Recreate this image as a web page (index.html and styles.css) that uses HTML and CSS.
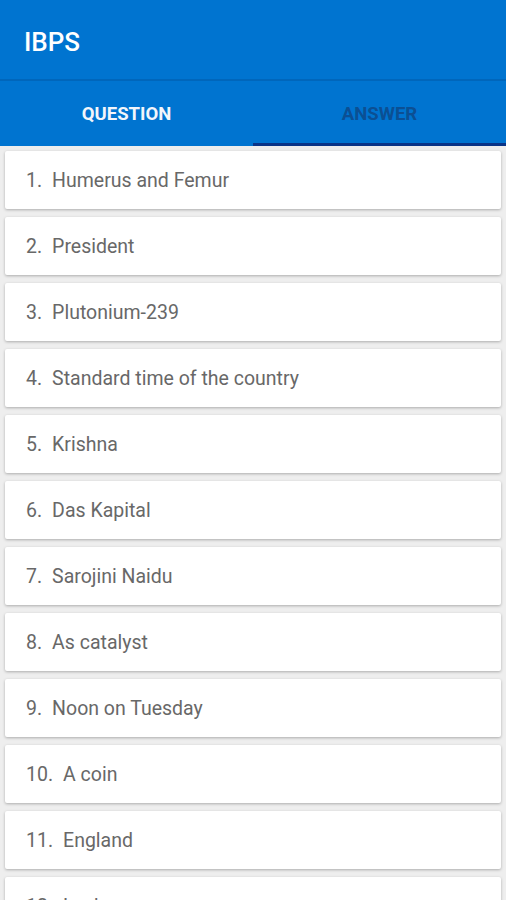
FILE: index.html
```html
<!DOCTYPE html>
<html lang="en">
<head>
    <meta charset="UTF-8">
    <meta name="viewport" content="width=device-width, initial-scale=1.0">
    <title>IBPS</title>
    <link rel="stylesheet" href="styles.css">
</head>
<body>
    <header class="app-bar">
        <h1>IBPS</h1>
    </header>
    <nav class="tabs">
        <div class="tab">QUESTION</div>
        <div class="tab active">ANSWER</div>
    </nav>
    <ul class="list">
        <li class="card"><span class="num">1.</span>Humerus and Femur</li>
        <li class="card"><span class="num">2.</span>President</li>
        <li class="card"><span class="num">3.</span>Plutonium-239</li>
        <li class="card"><span class="num">4.</span>Standard time of the country</li>
        <li class="card"><span class="num">5.</span>Krishna</li>
        <li class="card"><span class="num">6.</span>Das Kapital</li>
        <li class="card"><span class="num">7.</span>Sarojini Naidu</li>
        <li class="card"><span class="num">8.</span>As catalyst</li>
        <li class="card"><span class="num">9.</span>Noon on Tuesday</li>
        <li class="card"><span class="num">10.</span>A coin</li>
        <li class="card"><span class="num">11.</span>England</li>
        <li class="card"><span class="num">12.</span>Lucknow</li>
    </ul>
</body>
</html>
```

FILE: styles.css
```css
body {
    font-family: Roboto, "Liberation Sans", sans-serif;
    margin: 0;
    padding: 0;
    background: #eeeeee;
    overflow: hidden;
    height: 900px;
}
.app-bar {
    height: 81px;
    background: #0074d0;
    border-bottom: 2px solid #0066bb;
    display: flex;
    align-items: center;
    padding: 4px 24px 0;
    box-sizing: border-box;
}
.app-bar h1 {
    margin: 0;
    color: #fff;
    font-size: 26px;
    font-weight: 500;
}
.tabs {
    display: flex;
    height: 65px;
    background: #0074d0;
}
.tab {
    flex: 1;
    display: flex;
    align-items: center;
    justify-content: center;
    padding-top: 3px;
    font-size: 18.5px;
    font-weight: 700;
    color: #f2f6fb;
    border-bottom: 3px solid transparent;
}
.tab.active {
    color: #0b4f93;
    border-bottom-color: #0a3487;
}
.list {
    list-style: none;
    margin: 0;
    padding: 5px 5px 0;
    display: flex;
    flex-direction: column;
    gap: 8px;
}
.card {
    height: 58px;
    background: #fff;
    border-radius: 2px;
    box-shadow: 0 1px 3px rgba(0, 0, 0, 0.28);
    display: flex;
    align-items: center;
    padding: 0 21px;
    font-size: 19.5px;
    color: #686868;
}
.num {
    margin-right: 10px;
}
```
